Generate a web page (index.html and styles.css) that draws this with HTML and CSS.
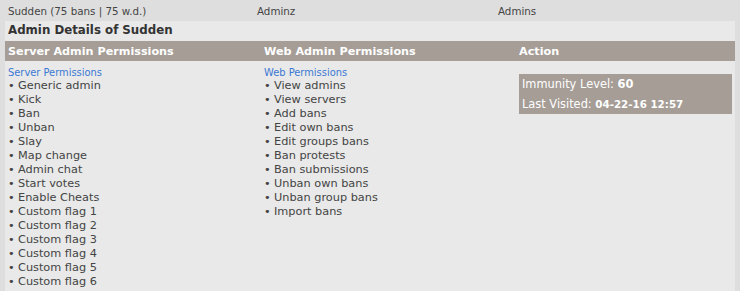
FILE: index.html
```html
<!DOCTYPE html>
<html lang="en">
<head>
  <meta charset="UTF-8" />
  <title>Admin Details of Sudden</title>
  <link rel="stylesheet" href="styles.css">
</head>
<body>

  <div class="topbar">
    <span class="top-name">Sudden (75 bans | 75 w.d.)</span>
    <span class="top-user">Adminz</span>
    <span class="top-group">Admins</span>
  </div>

  <main class="details">
    <h3>Admin Details of Sudden</h3>

    <div class="table-head">
      <div>Server Admin Permissions</div>
      <div>Web Admin Permissions</div>
      <div>Action</div>
    </div>

    <div class="table-body">
      <div class="perm-col">
        <a href="#" class="perm-title">Server Permissions</a>
        <ul>
          <li>Generic admin</li>
          <li>Kick</li>
          <li>Ban</li>
          <li>Unban</li>
          <li>Slay</li>
          <li>Map change</li>
          <li>Admin chat</li>
          <li>Start votes</li>
          <li>Enable Cheats</li>
          <li>Custom flag 1</li>
          <li>Custom flag 2</li>
          <li>Custom flag 3</li>
          <li>Custom flag 4</li>
          <li>Custom flag 5</li>
          <li>Custom flag 6</li>
        </ul>
      </div>

      <div class="perm-col">
        <a href="#" class="perm-title">Web Permissions</a>
        <ul>
          <li>View admins</li>
          <li>View servers</li>
          <li>Add bans</li>
          <li>Edit own bans</li>
          <li>Edit groups bans</li>
          <li>Ban protests</li>
          <li>Ban submissions</li>
          <li>Unban own bans</li>
          <li>Unban group bans</li>
          <li>Import bans</li>
        </ul>
      </div>

      <div class="action-col">
        <div class="action-box">
          <div class="action-row">Immunity Level: <b>60</b></div>
          <div class="action-row">Last Visited: <b class="small">04-22-16 12:57</b></div>
        </div>
      </div>
    </div>
  </main>

</body>
</html>
```

FILE: styles.css
```css
* {
  box-sizing: border-box;
  margin: 0;
  padding: 0;
}

body {
  font-family: 'DejaVu Sans', Verdana, sans-serif;
  background: #dedede;
  color: #3a3a3a;
  height: 291px;
  overflow: hidden;
  display: flex;
  flex-direction: column;
}

.topbar {
  height: 21px;
  display: grid;
  grid-template-columns: 249px 241px 1fr;
  align-items: center;
  padding-left: 8px;
  font-size: 10.3px;
  color: #444;
}

.details {
  flex: 1;
  margin: 0 5px;
  background: #e8e9e8;
}

h3 {
  font-size: 11.8px;
  color: #333;
  padding: 2px 3px 0;
  height: 20px;
}

.table-head {
  height: 20px;
  background: #a59d96;
  color: #fff;
  font-weight: bold;
  font-size: 11.2px;
  display: grid;
  grid-template-columns: 256px 255px 1fr;
  align-items: center;
  padding-left: 3px;
}

.table-body {
  display: grid;
  grid-template-columns: 256px 255px 1fr;
  padding: 5px 0 0 3px;
}

.perm-title {
  display: block;
  color: #3b78d4;
  text-decoration: none;
  font-size: 9.9px;
  line-height: 13px;
}

ul {
  list-style: none;
  font-size: 11.3px;
  line-height: 14px;
  color: #444;
}

li::before {
  content: "\2022";
  display: inline-block;
  width: 10px;
}

.action-col {
  padding-top: 8px;
  padding-right: 3px;
}

.action-box {
  background: #a59d96;
  color: #fff;
  font-size: 11.4px;
}

.action-row {
  line-height: 20px;
  padding-left: 3px;
}

.action-row b.small {
  font-size: 10.3px;
}
```
